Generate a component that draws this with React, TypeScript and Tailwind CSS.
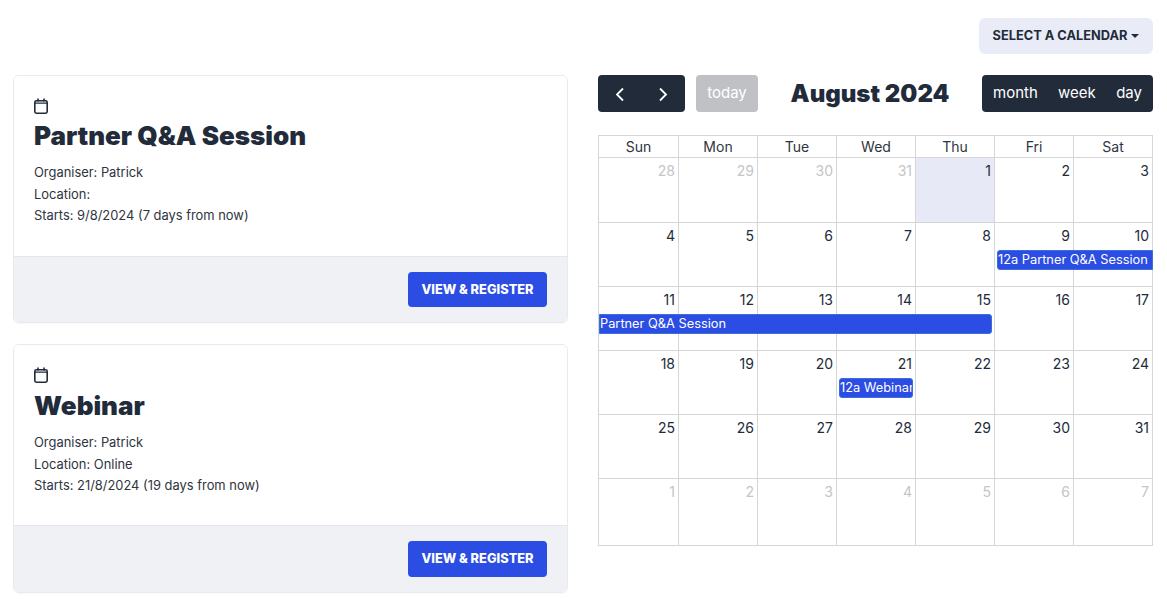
const Cal = () => (
  <svg width="14" height="16" viewBox="0 0 14 16" fill="none" stroke="#222b3a" strokeWidth="1.6" className="block">
    <rect x="0.8" y="2.8" width="12.4" height="12.4" rx="1.6" />
    <path d="M0.8 5.2h12.4" strokeWidth="1.2" />
    <path d="M4 0.5v3M10 0.5v3" />
  </svg>
);

function Card({ title, location, starts, h, footer, btn, mt }: { title: string; location: string; starts: string; h: string; footer: string; btn: string; mt: string }) {
  return (
    <div className={`${h} flex flex-col rounded-md border border-[#e8eaef] overflow-hidden shadow-[0_1px_1px_rgba(0,0,0,0.03)]`}>
      <div className="flex-1 bg-white pl-5 pt-[22px]">
        <Cal />
        <h2 className={`${mt} text-[26px] leading-[32px] font-black text-[#222b3a]`}>{title}</h2>
        <div className="mt-[10px] text-[12.9px] text-[#2f3540]">
          <p className="h-[21.5px] leading-[21.5px]">Organiser: Patrick</p>
          <p className="h-[21.5px] leading-[21.5px]">Location:{location}</p>
          <p className="h-[21.5px] leading-[21.5px]">{starts}</p>
        </div>
      </div>
      <div className={`${footer} shrink-0 bg-[#f0f1f5] border-t border-[#e4e6ee] flex items-center justify-end pr-5`}>
        <button className={`w-[139px] ${btn} rounded-[4px] bg-[#2b4de4] text-white text-[12.8px] font-extrabold`}>VIEW &amp; REGISTER</button>
      </div>
    </div>
  );
}

const days = ["Sun", "Mon", "Tue", "Wed", "Thu", "Fri", "Sat"];
const weeks: { n: number; dim?: boolean; today?: boolean }[][] = [
  [{ n: 28, dim: true }, { n: 29, dim: true }, { n: 30, dim: true }, { n: 31, dim: true }, { n: 1, today: true }, { n: 2 }, { n: 3 }],
  [{ n: 4 }, { n: 5 }, { n: 6 }, { n: 7 }, { n: 8 }, { n: 9 }, { n: 10 }],
  [{ n: 11 }, { n: 12 }, { n: 13 }, { n: 14 }, { n: 15 }, { n: 16 }, { n: 17 }],
  [{ n: 18 }, { n: 19 }, { n: 20 }, { n: 21 }, { n: 22 }, { n: 23 }, { n: 24 }],
  [{ n: 25 }, { n: 26 }, { n: 27 }, { n: 28 }, { n: 29 }, { n: 30 }, { n: 31 }],
  [{ n: 1, dim: true }, { n: 2, dim: true }, { n: 3, dim: true }, { n: 4, dim: true }, { n: 5, dim: true }, { n: 6, dim: true }, { n: 7, dim: true }],
];
const rowH = ["h-[65px]", "h-[64px]", "h-[64px]", "h-[64px]", "h-[64px]", "h-[67px]"];
const gridCols = "grid grid-cols-[80px_79px_79px_79px_79px_79px_79px]";

export default function App() {
  return (
    <div className="w-[1167px] h-[608px] overflow-hidden bg-white text-[#222b3a]" style={{ fontFamily: "Inter, 'Liberation Sans', sans-serif" }}>
      <div className="flex justify-end pt-[18px] pr-[14px]">
        <button className="w-[174px] h-[36px] rounded-md bg-[#e9ecf7] text-[12.8px] font-bold text-[#222b3a] flex items-center justify-center gap-[4px]">
          SELECT A CALENDAR
          <span className="w-0 h-0 border-x-[4px] border-x-transparent border-t-[4px] border-t-[#222b3a]" />
        </button>
      </div>
      <div className="flex gap-[30px] pl-[13px] pt-[21px]">
        <div className="w-[555px] flex flex-col gap-[21px]">
          <Card title="Partner Q&A Session" location="" starts="Starts: 9/8/2024 (7 days from now)" h="h-[248px]" footer="h-[66px]" btn="h-[35px]" mt="mt-[6px]" />
          <Card title="Webinar" location=" Online" starts="Starts: 21/8/2024 (19 days from now)" h="h-[249px]" footer="h-[67px]" btn="h-[36px]" mt="mt-[7px]" />
        </div>
        <div className="w-[555px]">
          <div className="h-[37px] flex items-center">
            <div className="w-[87px] h-[37px] rounded-[4px] bg-[#222b3a] text-white flex items-center justify-around px-[1px]">
              <svg width="16" height="16" viewBox="0 0 16 16" fill="none" stroke="white" strokeWidth="1.8"><path d="M11 2.5L5 8.5l6 6" /></svg>
              <svg width="16" height="16" viewBox="0 0 16 16" fill="none" stroke="white" strokeWidth="1.8"><path d="M5 2.5l6 6-6 6" /></svg>
            </div>
            <div className="ml-[11px] w-[62px] h-[37px] rounded-[4px] bg-[#c0c1c5] text-white text-[15px] flex items-center justify-center">today</div>
            <h1 className="w-[224px] text-center text-[24px] leading-[32px] font-black text-[#222b3a] whitespace-nowrap">August 2024</h1>
            <div className="w-[171px] h-[37px] rounded-[4px] bg-[#222b3a] text-white text-[15px] flex items-center justify-between pl-[11px] pr-[11px]">
              <span>month</span><span>week</span><span>day</span>
            </div>
          </div>
          <div className="mt-[23px] w-[555px] border-l border-t border-[#d6d6d6] text-[14px]">
            <div className={`${gridCols} h-[22px]`}>
              {days.map((d) => (
                <div key={d} className="border-r border-b border-[#d6d6d6] text-center leading-[21px] text-[#2f3540]">{d}</div>
              ))}
            </div>
            {weeks.map((w, i) => (
              <div key={i} className={`relative ${gridCols} ${rowH[i]}`}>
                {w.map((c, j) => (
                  <div key={j} className={`border-r border-b border-[#d6d6d6] text-right pr-[3px] pt-[3px] leading-[20px] ${c.today ? "bg-[#e7eaf6]" : ""} ${c.dim ? "text-[#c3c5c9]" : "text-[#222b3a]"}`}>{c.n}</div>
                ))}
                {i === 1 && (
                  <div className="absolute left-[398px] right-0 top-[27px] h-[20px] bg-[#2b4de4] border border-[#3a6fd8] rounded-l-[3px] text-white text-[12.8px] leading-[17px] whitespace-nowrap overflow-hidden">12a Partner Q&amp;A Session</div>
                )}
                {i === 2 && (
                  <div className="absolute left-0 w-[393px] top-[27px] h-[20px] bg-[#2b4de4] border border-[#3a6fd8] rounded-r-[3px] text-white text-[12.8px] leading-[17px] whitespace-nowrap overflow-hidden">Partner Q&amp;A Session</div>
                )}
                {i === 3 && (
                  <div className="absolute left-[240px] w-[74px] top-[27px] h-[20px] bg-[#2b4de4] border border-[#3a6fd8] rounded-[3px] text-white text-[12.8px] leading-[17px] whitespace-nowrap overflow-hidden">12a Webinar</div>
                )}
              </div>
            ))}
          </div>
        </div>
      </div>
    </div>
  );
}
